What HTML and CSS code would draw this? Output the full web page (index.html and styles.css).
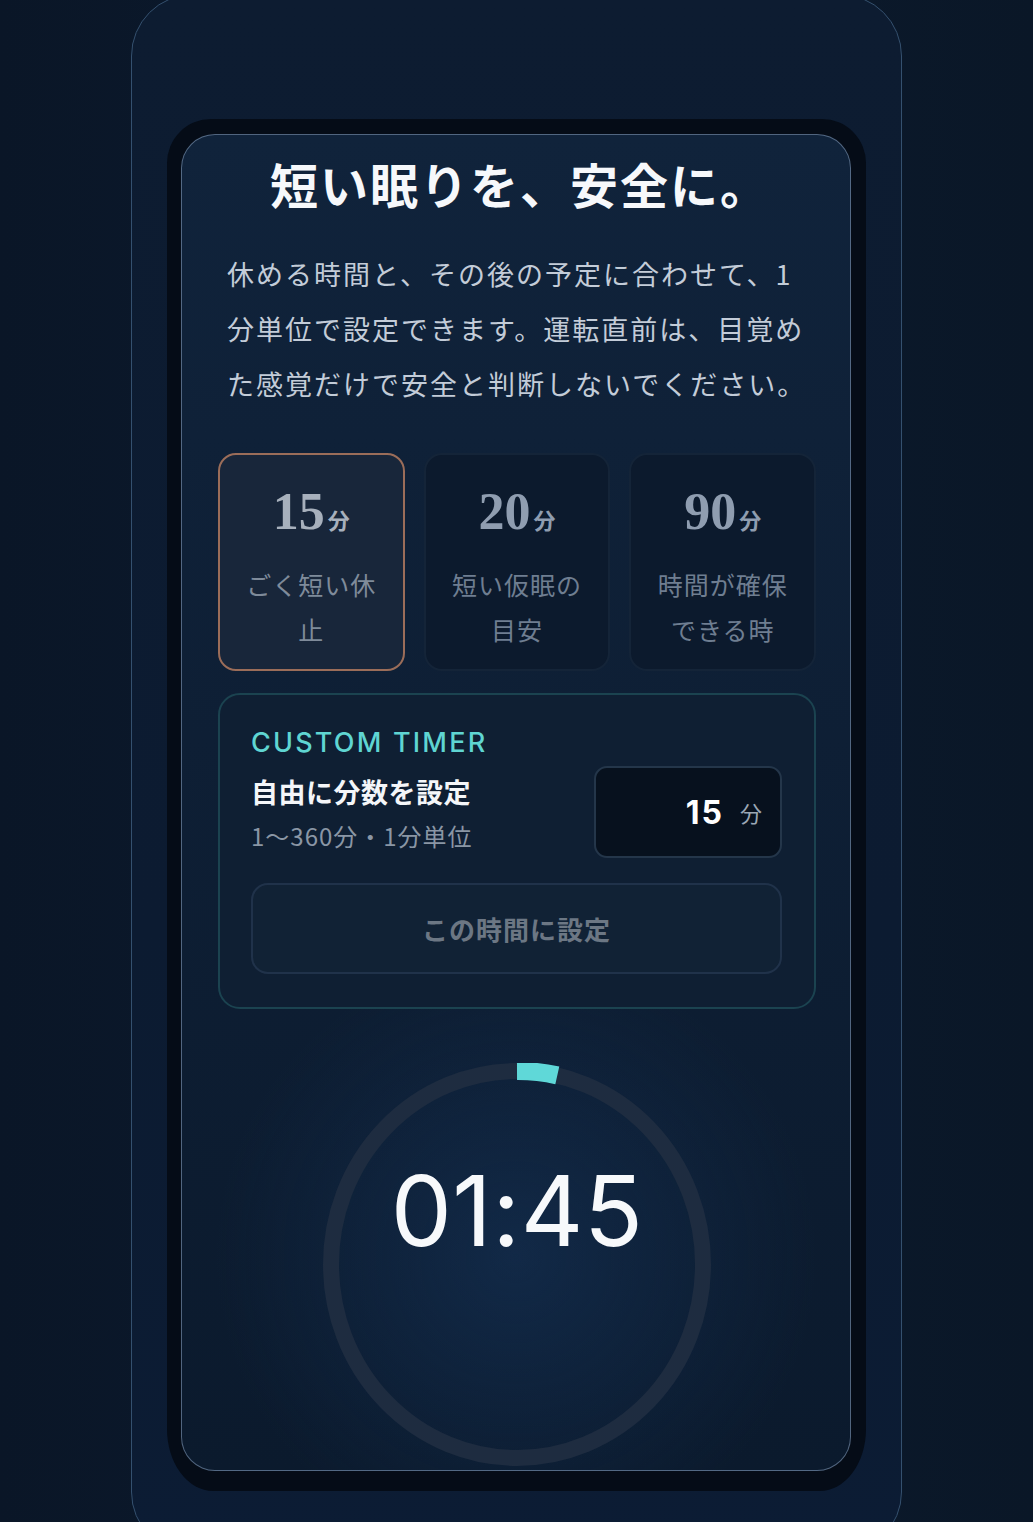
FILE: index.html
```html
<!DOCTYPE html>
<html lang="ja">
<head>
  <meta charset="utf-8">
  <title>仮眠タイマー</title>
  <link rel="stylesheet" href="styles.css">
</head>
<body>
  <div class="device">
    <div class="bezel">
      <main class="screen">
        <h1 class="title">短い眠りを、安全に。</h1>
        <p class="lead">休める時間と、その後の予定に合わせて、1分単位で設定できます。運転直前は、目覚めた感覚だけで安全と判断しないでください。</p>

        <div class="presets">
          <button class="preset active">
            <span class="preset-num">15<small>分</small></span>
            <span class="preset-label">ごく短い休止</span>
          </button>
          <button class="preset">
            <span class="preset-num">20<small>分</small></span>
            <span class="preset-label">短い仮眠の目安</span>
          </button>
          <button class="preset">
            <span class="preset-num">90<small>分</small></span>
            <span class="preset-label">時間が確保できる時</span>
          </button>
        </div>

        <section class="custom">
          <div class="custom-eyebrow">CUSTOM TIMER</div>
          <div class="custom-row">
            <div class="custom-text">
              <div class="custom-title">自由に分数を設定</div>
              <div class="custom-sub">1〜360分・1分単位</div>
            </div>
            <label class="minutes">
              <span class="minutes-value">15</span>
              <span class="minutes-unit">分</span>
            </label>
          </div>
          <button class="apply">この時間に設定</button>
        </section>

        <section class="timer">
          <div class="ring">
            <svg width="388" height="403" viewBox="0 0 388 403">
              <ellipse class="ring-track" cx="194" cy="201.5" rx="186" ry="193.5"/>
              <path class="ring-progress" d="M194 8 A186 193.5 0 0 1 234.3 12.4"/>
            </svg>
            <div class="time">01:45</div>
          </div>
        </section>
      </main>
    </div>
  </div>
</body>
</html>
```

FILE: styles.css
```css
html, body {
  margin: 0;
  height: 100%;
  overflow: hidden;
}

body {
  background: linear-gradient(90deg, #0a1627 0%, #0c1b30 50%, #0a1727 100%);
  font-family: "Noto Sans CJK JP", "Noto Sans", sans-serif;
  color: #c6cfdb;
}

.device {
  box-sizing: border-box;
  width: 771px;
  height: 1560px;
  margin: -6px auto 0;
  padding: 124px 35px 0;
  border: 1px solid #34506e;
  border-radius: 62px;
  background: linear-gradient(180deg, #0d1c31 0%, #0c1b31 60%, #0c1c34 100%);
}

.bezel {
  width: 699px;
  box-sizing: border-box;
  padding: 15px 15px 20px 14px;
  border-radius: 44px 44px 46px 46px / 44px 44px 62px 62px;
  background: #050c17;
}

.screen {
  box-sizing: border-box;
  height: 1337px;
  padding: 16px 34px 0 36px;
  overflow: hidden;
  border: 1px solid rgba(128, 152, 182, 0.6);
  border-radius: 34px;
  background:
    radial-gradient(circle at 50% 84%, rgba(22, 52, 90, 0.55) 0, rgba(22, 52, 90, 0) 300px),
    linear-gradient(180deg, #10233b 0%, #0e1f35 45%, #0b1a2d 100%);
}

.title {
  margin: 0;
  padding-left: 6px;
  font-size: 48px;
  line-height: 64px;
  font-weight: 700;
  text-align: center;
  color: #f6f8fb;
  letter-spacing: 2px;
}

.lead {
  margin: 31px 6px 0 9px;
  font-size: 27px;
  line-height: 55px;
  letter-spacing: 2px;
  color: #c3ccd8;
}

.presets {
  display: grid;
  grid-template-columns: repeat(3, 1fr);
  gap: 19px;
  margin-top: 42px;
}

.preset {
  display: flex;
  flex-direction: column;
  align-items: center;
  height: 218px;
  box-sizing: border-box;
  padding: 27px 22px 0;
  border: 2px solid #142438;
  border-radius: 18px;
  background: #0c1a2d;
  font-family: inherit;
  cursor: pointer;
}

.preset.active {
  border-color: #9b6d59;
  background: #18263a;
}

.preset-num {
  font-family: "Liberation Serif", serif;
  font-weight: 700;
  font-size: 52px;
  line-height: 60px;
  color: #8f9db0;
}

.preset.active .preset-num {
  color: #a7b0bc;
}

.preset-num small {
  margin-left: 3px;
  font-family: "Noto Sans CJK JP", sans-serif;
  font-size: 22px;
  font-weight: 700;
}

.preset-label {
  margin-top: 13px;
  font-size: 25px;
  line-height: 45px;
  letter-spacing: 1px;
  color: #6f7e91;
  text-align: center;
}

.preset.active .preset-label {
  color: #7f8b9a;
}

.custom {
  margin-top: 22px;
  padding: 31px 32px 33px 31px;
  border: 2px solid #1b4350;
  border-radius: 22px;
  background: #0f1f33;
}

.custom-eyebrow {
  font-family: "Inter", sans-serif;
  font-weight: 500;
  font-size: 27px;
  line-height: 34px;
  letter-spacing: 2.2px;
  color: #5fd5d2;
}

.custom-row {
  display: flex;
  align-items: center;
  justify-content: space-between;
  margin-top: 6px;
}

.custom-title {
  font-size: 27px;
  line-height: 40px;
  font-weight: 700;
  letter-spacing: 0.5px;
  color: #f4f6f9;
}

.custom-sub {
  margin-top: 7px;
  font-size: 24px;
  line-height: 34px;
  letter-spacing: 1px;
  color: #8a96a5;
}

.minutes {
  display: flex;
  align-items: center;
  justify-content: flex-end;
  gap: 16px;
  width: 188px;
  height: 92px;
  box-sizing: border-box;
  padding-right: 18px;
  border: 2px solid #24364a;
  border-radius: 13px;
  background: #07111e;
}

.minutes-value {
  font-family: "Inter", sans-serif;
  font-weight: 700;
  font-size: 32px;
  letter-spacing: 2px;
  color: #ffffff;
}

.minutes-unit {
  font-size: 22px;
  color: #9ba7b5;
}

.apply {
  display: block;
  width: 100%;
  height: 91px;
  margin-top: 25px;
  border: 2px solid #20324a;
  border-radius: 17px;
  background: #112235;
  font-family: inherit;
  font-size: 26px;
  font-weight: 700;
  letter-spacing: 1px;
  color: #6c7784;
  cursor: pointer;
}

.timer {
  display: flex;
  justify-content: center;
  margin-top: 54px;
}

.ring {
  position: relative;
  width: 388px;
  height: 403px;
}

.ring svg {
  display: block;
}

.ring-track {
  fill: none;
  stroke: #1e2c40;
  stroke-width: 16;
}

.ring-progress {
  fill: none;
  stroke: #5fd8d8;
  stroke-width: 18;
}

.time {
  position: absolute;
  left: 0;
  right: 0;
  top: 98px;
  text-align: center;
  font-family: "Inter", sans-serif;
  font-weight: 400;
  font-size: 97px;
  line-height: 100px;
  letter-spacing: 0.5px;
  color: #f7f9fb;
}
```
